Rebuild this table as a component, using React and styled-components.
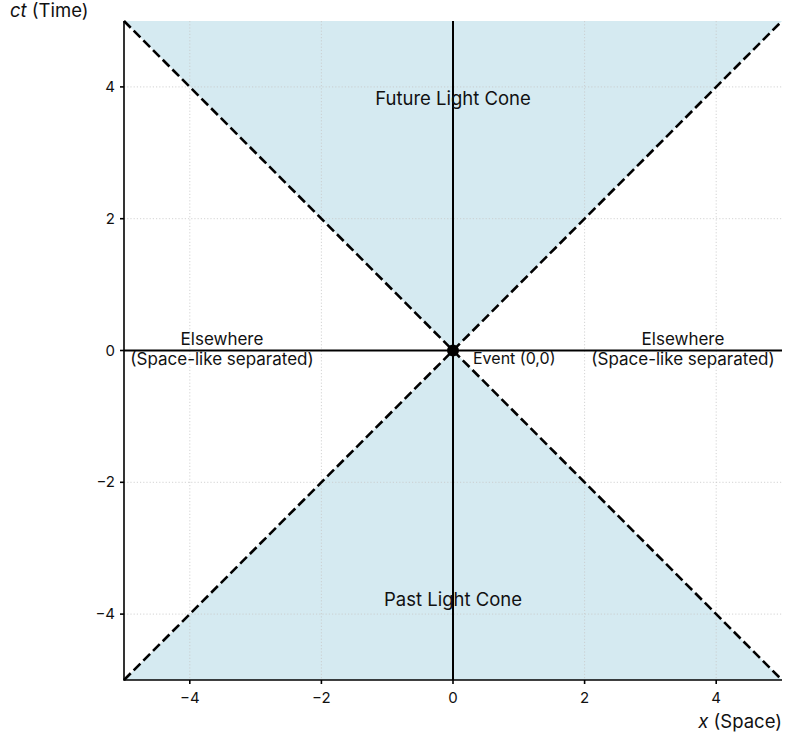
import styled, { createGlobalStyle } from "styled-components";

const GlobalStyle = createGlobalStyle`
  html, body { margin: 0; padding: 0; background: #fff; }
  body { font-family: Inter, "Open Sans", sans-serif; }
`

// plot frame in pixels
const L = 124, R = 782, T = 21, B = 680
const cx = (L + R) / 2
const cy = (T + B) / 2
const sx = (R - L) / 10
const sy = (B - T) / 10
const px = v => cx + v * sx
const py = v => cy - v * sy

const ticks = [-4, -2, 0, 2, 4]
const fmt = v => (v < 0 ? `\u2212${-v}` : `${v}`)

export default function App(){
    return(
        <Page>
            <GlobalStyle/>
            <Chart width="792" height="744" viewBox="0 0 792 744">
                <Cone points={`${L},${T} ${R},${T} ${cx},${cy}`}/>
                <Cone points={`${L},${B} ${R},${B} ${cx},${cy}`}/>
                {ticks.map(t =>
                    <g key={`g${t}`}>
                        <Grid x1={px(t)} x2={px(t)} y1={T} y2={B}/>
                        <Grid x1={L} x2={R} y1={py(t)} y2={py(t)}/>
                    </g>
                )}
                <AxisLine x1={cx} x2={cx} y1={T} y2={B}/>
                <AxisLine x1={L} x2={R} y1={cy} y2={cy}/>
                <LightLine x1={L} y1={T} x2={R} y2={B}/>
                <LightLine x1={L} y1={B} x2={R} y2={T}/>
                <circle cx={cx} cy={cy} r="6" fill="#000"/>

                <Spine x1={L} x2={L} y1={T} y2={B + 0.5}/>
                <Spine x1={L - 0.5} x2={R} y1={B} y2={B}/>
                {ticks.map(t =>
                    <g key={`t${t}`}>
                        <Spine x1={L - 4} x2={L} y1={py(t)} y2={py(t)}/>
                        <TickText x={L - 9} y={py(t) + 5} anchor="end">{fmt(t)}</TickText>
                        <Spine x1={px(t)} x2={px(t)} y1={B} y2={B + 4}/>
                        <TickText x={px(t)} y={B + 23} anchor="middle">{fmt(t)}</TickText>
                    </g>
                )}

                <AxisTitle x="10" y="17" anchor="start"><tspan fontStyle="italic">ct</tspan> (Time)</AxisTitle>
                <AxisTitle x={R} y="728" anchor="end"><tspan fontStyle="italic">x</tspan> (Space)</AxisTitle>

                <Region x={cx} y="105" anchor="middle" size={18.5}>Future Light Cone</Region>
                <Region x={cx} y="606" anchor="middle" size={18.5}>Past Light Cone</Region>
                <Region x="222" y="345" anchor="middle">Elsewhere</Region>
                <Region x="222" y="365" anchor="middle">(Space-like separated)</Region>
                <Region x="683" y="345" anchor="middle">Elsewhere</Region>
                <Region x="683" y="365" anchor="middle">(Space-like separated)</Region>
                <Note x="473" y="364">Event (0,0)</Note>
            </Chart>
        </Page>
    )
}

const Page = styled.div`
    width: 792px;
    height: 744px;
    overflow: hidden;
`
const Chart = styled.svg`
    display: block;
    font-family: Inter, "Open Sans", sans-serif;
`
const Grid = styled.line`
    stroke: #c8c8c8;
    stroke-width: 0.8;
    stroke-dasharray: 1.2 2;
`
const Cone = styled.polygon`
    fill: #d5eaf1;
`
const AxisLine = styled.line`
    stroke: #000;
    stroke-width: 2;
`
const LightLine = styled.line`
    stroke: #000;
    stroke-width: 2.6;
    stroke-dasharray: 9.5 4.2;
`
const Spine = styled.line`
    stroke: #000;
    stroke-width: 1.6;
`
const TickText = styled.text.attrs(p => ({ textAnchor: p.anchor }))`
    font-size: 15px;
    fill: #111;
`
const AxisTitle = styled.text.attrs(p => ({ textAnchor: p.anchor }))`
    font-size: 18.5px;
    fill: #111;
`
const Region = styled.text.attrs(p => ({ textAnchor: p.anchor }))`
    font-size: ${p => p.size || 17}px;
    fill: #111;
`
const Note = styled.text`
    font-size: 16px;
    fill: #111;
`
